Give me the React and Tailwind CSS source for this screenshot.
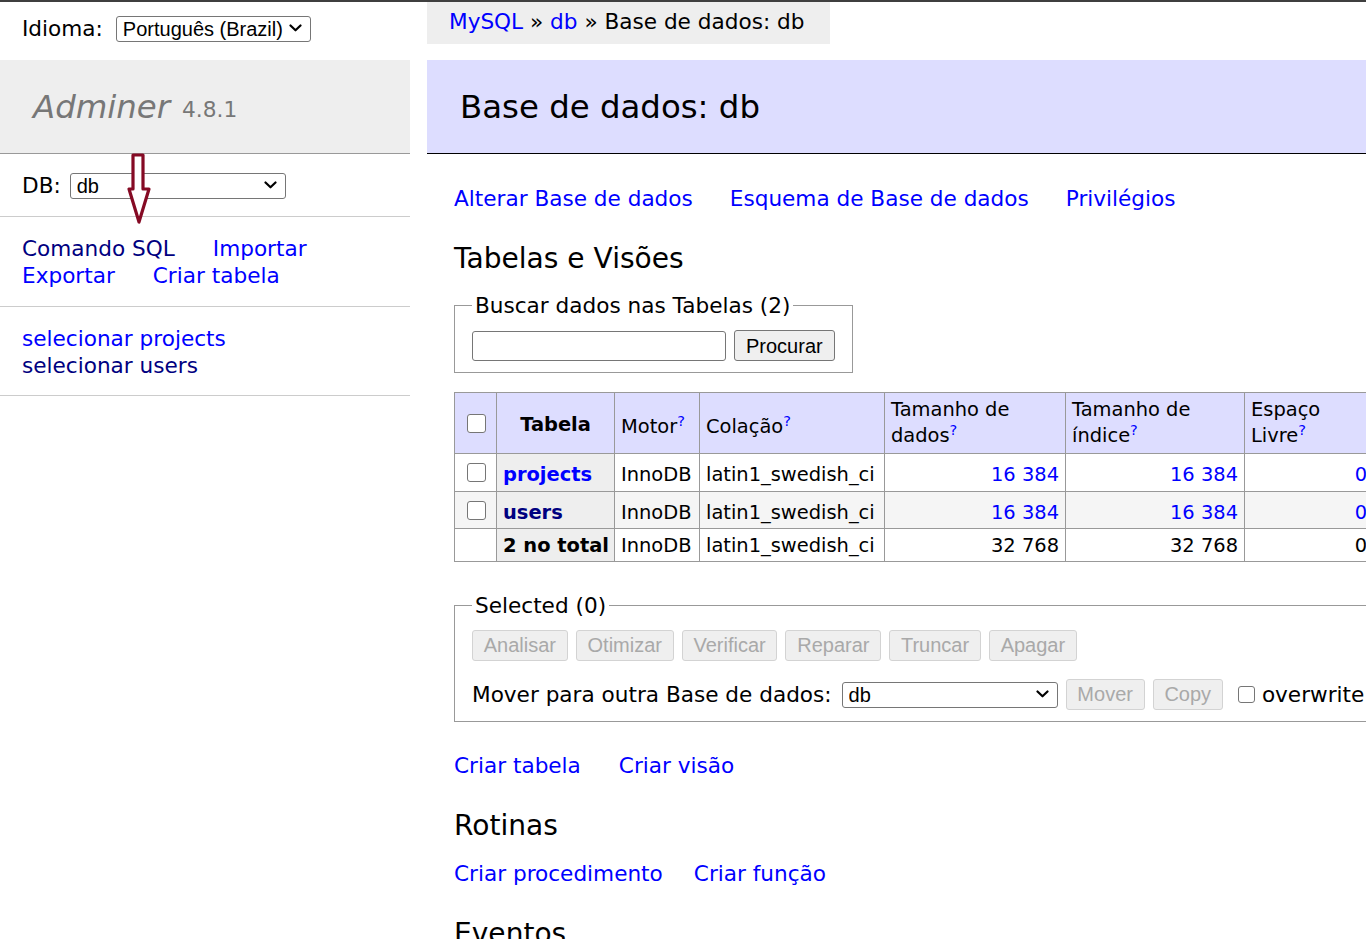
import React from "react";

const Chevron = () => (
  <svg
    width="13"
    height="8"
    viewBox="0 0 13 8"
    className="absolute right-[9px] top-[9px] pointer-events-none"
  >
    <path
      d="M1.5 1.5 L6.5 6.3 L11.5 1.5"
      fill="none"
      stroke="#000"
      strokeWidth="2.2"
      strokeLinecap="round"
      strokeLinejoin="round"
    />
  </svg>
);

function Select({ className, value }) {
  return (
    <div className={className}>
      <select
        defaultValue={value}
        className="appearance-none w-full h-full border border-[#767676] rounded-[3px] bg-white pl-[6px] pr-[24px] font-['Liberation_Sans',Arial,sans-serif] text-[20px] leading-[24px] text-black outline-none"
      >
        <option value={value}>{value}</option>
      </select>
      <Chevron />
    </div>
  );
}

function DisabledBtn({ children }) {
  return (
    <button
      disabled
      className="h-[31px] px-[10.75px] border border-[#d3d3d3] rounded-[3px] bg-[#efefef] text-[#a9a9a9] font-['Liberation_Sans',Arial,sans-serif] text-[20px] leading-[20px]"
    >
      {children}
    </button>
  );
}

function Check({ className }) {
  return (
    <input
      type="checkbox"
      className={
        "appearance-none block border-[1.5px] border-[#767676] rounded-[3px] bg-white " +
        className
      }
    />
  );
}

const Help = () => <sup className="text-[#0000ff]">?</sup>;

export default function App() {
  const th = "border border-[#999] px-[6px] pt-[7px] pb-[1px] bg-[#eee] text-left font-bold";
  const td = "border border-[#999] px-[6px] pt-[7px] pb-[1px]";
  const tdLast = "border border-[#999] px-[6px] pt-[5px] pb-[3px]";
  const hd = "border border-[#999] px-[6px] pt-[4px] pb-[4px] leading-[26px]";
  const hd1 = "border border-[#999] px-[6px] pt-[9px] pb-[1px] leading-[26px]";
  return (
    <div className="relative w-[1366px] h-[939px] overflow-hidden bg-white text-black font-['DejaVu_Sans',Verdana,sans-serif] text-[21.6px] leading-[27px]">
      <div className="h-[2px] bg-[#3f3f3f]" />
      <div className="flex">
        {/* Left menu */}
        <aside className="w-[410px] shrink-0">
          <div className="h-[58px] pt-[12px] px-[22px]">
            <div className="flex items-center gap-[13px] h-[28px]">
              <span>Idioma:</span>
              <Select className="relative w-[195px] h-[26px]" value="Português (Brazil)" />
            </div>
          </div>
          <h1 className="h-[94px] bg-[#eee] border-b border-[#999] px-[33px] flex items-center">
            <span className="italic text-[32.4px] leading-[40px] text-[#777]">Adminer</span>
            <span className="ml-[12px] mt-[6px] text-[21.7px] text-[#777]">4.8.1</span>
          </h1>
          <div className="h-[63px] border-b border-[#ccc] px-[22px] flex items-center">
            <span>DB:</span>
            <Select className="relative ml-[9px] w-[216px] h-[26px]" value="db" />
          </div>
          <div className="h-[90px] border-b border-[#ccc] px-[22px] pt-[18px]">
            <div className="flex gap-[38px]">
              <a className="text-[#000080]">Comando SQL</a>
              <a className="text-[#0000ff]">Importar</a>
            </div>
            <div className="flex gap-[38px]">
              <a className="text-[#0000ff]">Exportar</a>
              <a className="text-[#0000ff]">Criar tabela</a>
            </div>
          </div>
          <ul className="h-[89px] border-b border-[#ccc] px-[22px] pt-[18px]">
            <li>
              <a className="text-[#0000ff]">selecionar projects</a>
            </li>
            <li>
              <a className="text-[#000080]">selecionar users</a>
            </li>
          </ul>
        </aside>

        {/* Content */}
        <main className="ml-[17px] flex-1">
          <div className="inline-block h-[42px] bg-[#eee] pl-[22px] pr-[26px] leading-[39px] whitespace-nowrap">
            <a className="text-[#0000ff]">MySQL</a> » <a className="text-[#0000ff]">db</a> » Base de dados: db
          </div>
          <h2 className="mt-[16px] h-[94px] bg-[#ddf] border-b border-black pl-[33px] flex items-center text-[32.4px] leading-[40px]">
            Base de dados: db
          </h2>
          <div className="pl-[27px]">
            <div className="mt-[31px] flex gap-[37px] text-[#0000ff]">
              <a>Alterar Base de dados</a>
              <a>Esquema de Base de dados</a>
              <a>Privilégios</a>
            </div>
            <h3 className="mt-[29px] text-[28.08px] leading-[35px]">Tabelas e Visões</h3>

            <fieldset className="mt-[16px] inline-block w-[399px] border border-[#999] px-[17px] pt-[11px] pb-[11px]">
              <legend className="px-[3px]">Buscar dados nas Tabelas (2)</legend>
              <div className="flex items-center gap-[8px]">
                <input className="w-[254px] h-[30px] border border-[#767676] rounded-[3px] bg-white" />
                <button className="h-[31px] px-[11px] border border-[#767676] rounded-[3px] bg-[#efefef] text-black font-['Liberation_Sans',Arial,sans-serif] text-[20px] leading-[20px]">
                  Procurar
                </button>
              </div>
            </fieldset>

            <table className="mt-[19px] border-collapse table-fixed w-[1349px] text-[19.44px] leading-[24.3px]">
              <colgroup>
                <col className="w-[42px]" />
                <col className="w-[118px]" />
                <col className="w-[85px]" />
                <col className="w-[185px]" />
                <col className="w-[181px]" />
                <col className="w-[179px]" />
                <col className="w-[129px]" />
                <col className="w-[180px]" />
                <col className="w-[100px]" />
                <col className="w-[150px]" />
              </colgroup>
              <thead>
                <tr className="h-[61px] bg-[#ddf]">
                  <td className="border border-[#999] px-[12px]">
                    <Check className="w-[19px] h-[19px]" />
                  </td>
                  <th className="border border-[#999] text-center font-bold pt-[4px]">Tabela</th>
                  <td className={hd1}>
                    Motor
                    <Help />
                  </td>
                  <td className={hd1}>
                    Colação
                    <Help />
                  </td>
                  <td className={hd}>
                    Tamanho de
                    <br />
                    dados
                    <Help />
                  </td>
                  <td className={hd}>
                    Tamanho de
                    <br />
                    índice
                    <Help />
                  </td>
                  <td className={hd}>
                    Espaço
                    <br />
                    Livre
                    <Help />
                  </td>
                  <td className={hd}>
                    Auto
                    <br />
                    Incremento
                    <Help />
                  </td>
                  <td className={hd1}>
                    Linhas
                    <Help />
                  </td>
                  <td className={hd1}>Comentário</td>
                </tr>
              </thead>
              <tbody>
                <tr className="h-[38px] bg-white">
                  <td className="border border-[#999] px-[12px]">
                    <Check className="w-[19px] h-[19px]" />
                  </td>
                  <th className={th}>
                    <a className="text-[#0000ff]">projects</a>
                  </th>
                  <td className={td}>InnoDB</td>
                  <td className={td}>latin1_swedish_ci</td>
                  <td className={td + " text-right text-[#0000ff]"}>16 384</td>
                  <td className={td + " text-right text-[#0000ff]"}>16 384</td>
                  <td className={td + " text-right text-[#0000ff]"}>0</td>
                  <td className={td + " text-right"}>3</td>
                  <td className={td + " text-right"}>2</td>
                  <td className={td}></td>
                </tr>
                <tr className="h-[37px] bg-[#f5f5f5]">
                  <td className="border border-[#999] px-[12px]">
                    <Check className="w-[19px] h-[19px]" />
                  </td>
                  <th className={th}>
                    <a className="text-[#000080]">users</a>
                  </th>
                  <td className={td}>InnoDB</td>
                  <td className={td}>latin1_swedish_ci</td>
                  <td className={td + " text-right text-[#0000ff]"}>16 384</td>
                  <td className={td + " text-right text-[#0000ff]"}>16 384</td>
                  <td className={td + " text-right text-[#0000ff]"}>0</td>
                  <td className={td + " text-right"}>3</td>
                  <td className={td + " text-right"}>2</td>
                  <td className={td}></td>
                </tr>
                <tr className="h-[33px] bg-white">
                  <td className="border border-[#999]"></td>
                  <th className="border border-[#999] px-[6px] pt-[5px] pb-[3px] bg-[#eee] text-left font-bold whitespace-nowrap">
                    2 no total
                  </th>
                  <td className={tdLast}>InnoDB</td>
                  <td className={tdLast}>latin1_swedish_ci</td>
                  <td className={tdLast + " text-right"}>32 768</td>
                  <td className={tdLast + " text-right"}>32 768</td>
                  <td className={tdLast + " text-right"}>0</td>
                  <td className={tdLast}></td>
                  <td className={tdLast}></td>
                  <td className={tdLast}></td>
                </tr>
              </tbody>
            </table>

            <div className="pt-[30px] pb-[11px]">
              <fieldset className="w-[926px] border border-[#999] px-[17px] pt-[10px] pb-[11px]">
                <legend className="px-[3px]">Selected (0)</legend>
                <div className="flex items-center gap-[8px] h-[32px]">
                  <DisabledBtn>Analisar</DisabledBtn>
                  <DisabledBtn>Otimizar</DisabledBtn>
                  <DisabledBtn>Verificar</DisabledBtn>
                  <DisabledBtn>Reparar</DisabledBtn>
                  <DisabledBtn>Truncar</DisabledBtn>
                  <DisabledBtn>Apagar</DisabledBtn>
                </div>
                <div className="mt-[17px] flex items-center h-[32px] whitespace-nowrap">
                  <span>Mover para outra Base de dados:</span>
                  <Select className="relative ml-[10px] w-[216px] h-[26px]" value="db" />
                  <div className="ml-[8px]">
                    <DisabledBtn>Mover</DisabledBtn>
                  </div>
                  <div className="ml-[8px]">
                    <DisabledBtn>Copy</DisabledBtn>
                  </div>
                  <label className="ml-[15px] flex items-center gap-[7px]">
                    <Check className="w-[17px] h-[17px]" />
                    overwrite
                  </label>
                </div>
              </fieldset>
            </div>

            <div className="mt-[19px] flex gap-[38px] text-[#0000ff]">
              <a>Criar tabela</a>
              <a>Criar visão</a>
            </div>
            <h3 className="mt-[29px] text-[28.08px] leading-[35px]">Rotinas</h3>
            <div className="mt-[17px] flex gap-[31px] text-[#0000ff]">
              <a>Criar procedimento</a>
              <a>Criar função</a>
            </div>
            <h3 className="mt-[29px] text-[28.08px] leading-[35px]">Eventos</h3>
          </div>
        </main>
      </div>

      {/* annotation arrow */}
      <svg
        className="absolute left-[124px] top-[152px]"
        width="30"
        height="74"
        viewBox="0 0 30 74"
      >
        <path
          d="M9 3 L19 3 L19 37 L25 37 L15 70 L5 37 L9 37 Z"
          fill="white"
          stroke="#850a24"
          strokeWidth="3.2"
          strokeLinejoin="round"
        />
      </svg>
    </div>
  );
}
